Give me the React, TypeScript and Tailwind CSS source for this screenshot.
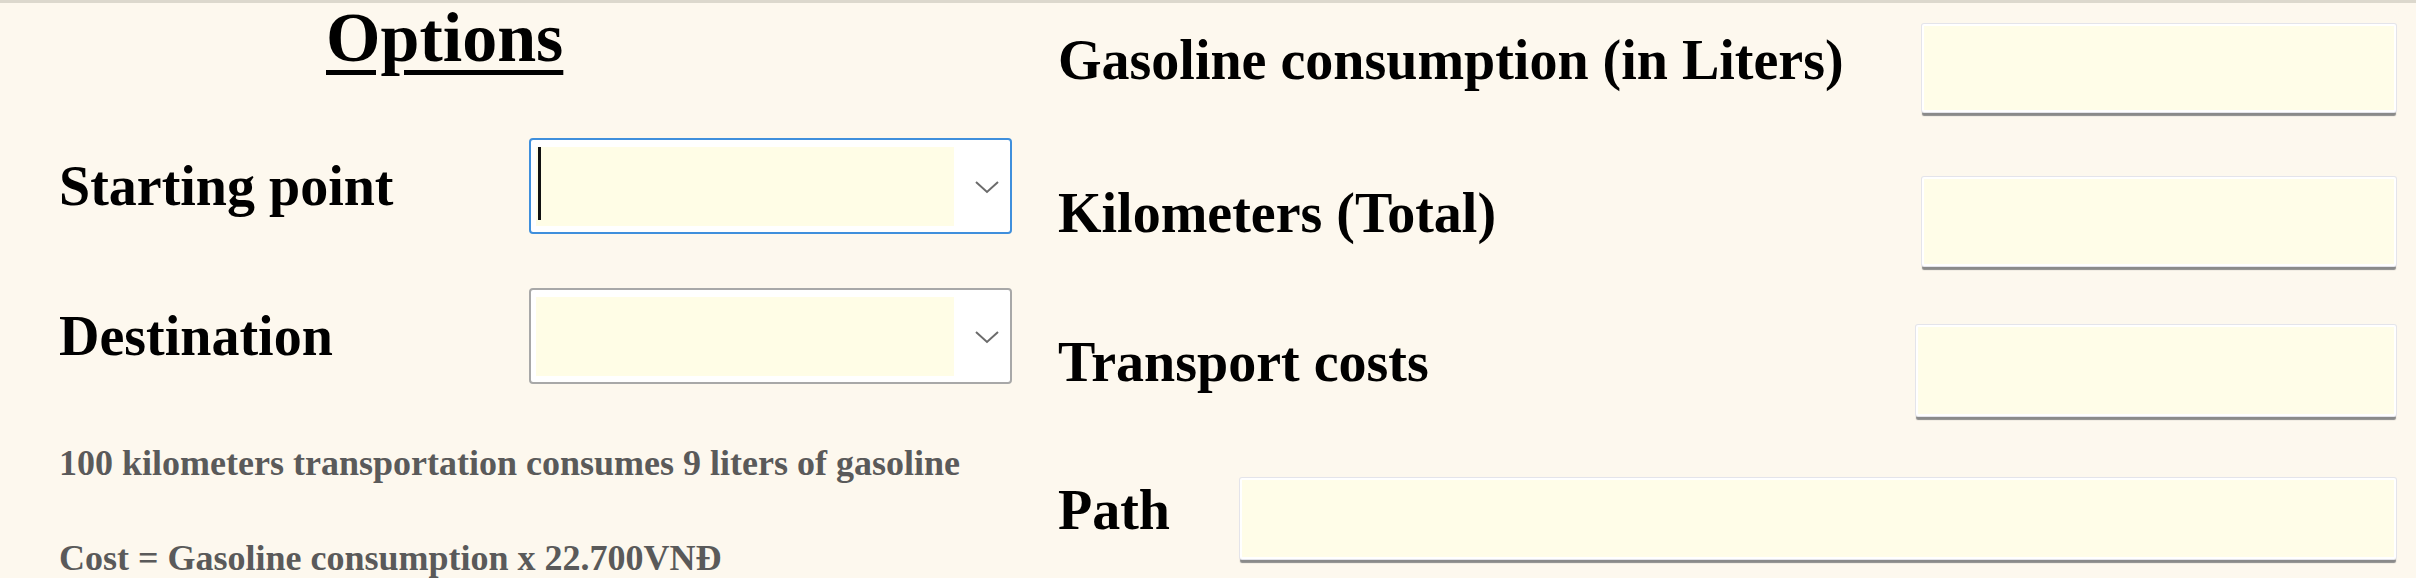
import React from "react";

function Chevron() {
  return (
    <svg width="26" height="16" viewBox="0 0 26 16" className="shrink-0">
      <polyline points="2,3 13,13 24,3" fill="none" stroke="#6b6b6b" strokeWidth="2" />
    </svg>
  );
}

function FakeSelect({ focused }: { focused?: boolean }) {
  return (
    <div
      className={
        focused
          ? "w-[483px] h-[96px] flex bg-white rounded-[4px] border-2 border-[#3f8fdc] pl-[5px] pt-[7px] pb-[6px]"
          : "w-[483px] h-[96px] flex bg-white rounded-[4px] border-2 border-[#a8a8a8] pl-[5px] pt-[7px] pb-[6px]"
      }
    >
      <div className="flex-1 bg-[#fffde6] flex items-start pl-[2px]">
        {focused && <div className="w-[3px] h-[73px] bg-[#111]" />}
      </div>
      <div className="w-[56px] flex items-center justify-end pr-[10px]">
        <Chevron />
      </div>
    </div>
  );
}

function Field({ w, h }: { w: number; h: number }) {
  return (
    <div
      className="bg-[#fffde8] rounded-[2px] border-2 border-white shadow-[0_0_0_1px_#e4e4ea,0_4px_1px_0_#8a8a8a] shrink-0"
      style={{ width: w, height: h }}
    />
  );
}

export default function App() {
  return (
    <div className="w-[2416px] h-[578px] overflow-hidden bg-[#fdf8ee] border-t-[3px] border-[#dcd8cd] flex font-['Liberation_Serif',serif] font-bold text-black">
      {/* left: options */}
      <div className="w-[1058px] shrink-0 pl-[59px]">
        <h2 className="text-[70px] leading-[70px] pl-[267px] underline decoration-[5px] underline-offset-[9px]">
          Options
        </h2>

        <div className="mt-[65px] h-[96px] flex items-center">
          <span className="w-[470px] text-[56px] leading-[62px]">Starting point</span>
          <FakeSelect focused />
        </div>

        <div className="mt-[54px] h-[96px] flex items-center">
          <span className="w-[470px] text-[56px] leading-[62px]">Destination</span>
          <FakeSelect />
        </div>

        <p className="mt-[59px] text-[36px] leading-[40px] text-[#5a5a5a]">
          100 kilometers transportation consumes 9 liters of gasoline
        </p>
        <p className="mt-[55px] text-[36px] leading-[40px] text-[#5a5a5a]">
          Cost = Gasoline consumption x 22.700VNĐ
        </p>
      </div>

      {/* right: results */}
      <div className="flex-1 pr-[20px] text-[56px] leading-[62px]">
        <div className="mt-[20px] h-[90px] flex items-center justify-between">
          <span className="pb-4">Gasoline consumption (in Liters)</span>
          <Field w={474} h={88} />
        </div>
        <div className="mt-[62px] h-[92px] flex items-center justify-between">
          <span className="pb-4">Kilometers (Total)</span>
          <Field w={474} h={89} />
        </div>
        <div className="mt-[56px] h-[94px] flex items-center justify-between">
          <span className="pb-4">Transport costs</span>
          <Field w={480} h={91} />
        </div>
        <div className="mt-[59px] h-[84px] flex items-center justify-between">
          <span className="pb-4">Path</span>
          <Field w={1156} h={81} />
        </div>
      </div>
    </div>
  );
}
